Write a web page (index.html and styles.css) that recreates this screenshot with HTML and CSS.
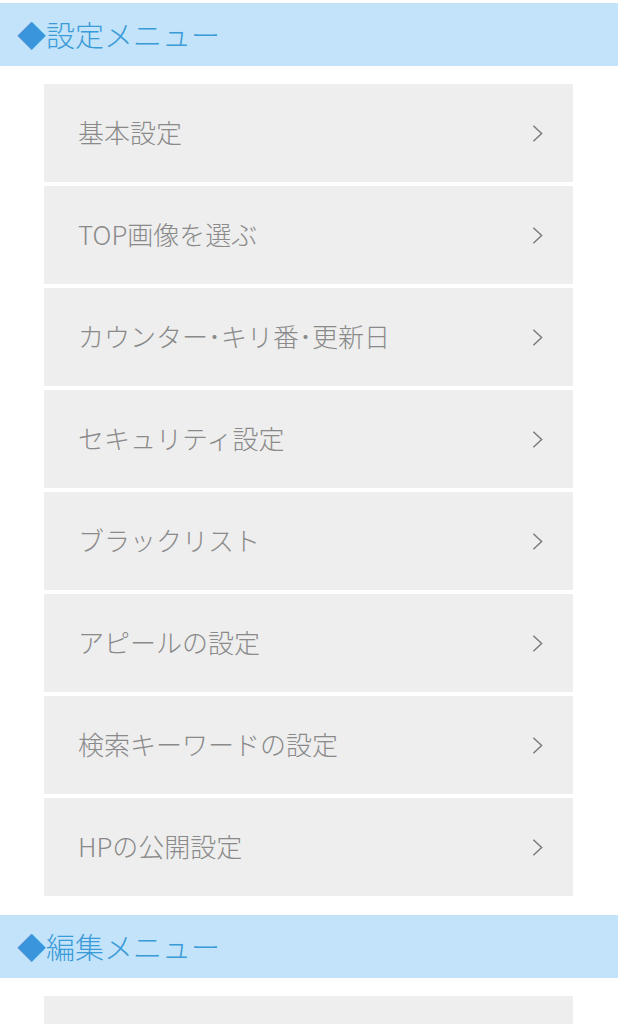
FILE: index.html
```html
<!DOCTYPE html>
<html lang="ja">
<head>
<meta charset="utf-8">
<title>設定メニュー</title>
<link rel="stylesheet" href="styles.css">
</head>
<body>
<section class="section">
  <h2 class="section-title"><span class="diamond">◆</span>設定メニュー</h2>
  <ul class="menu">
    <li class="item"><span class="label">基本設定</span><svg class="chev" viewBox="0 0 12 20"><path d="M1.5 1.5 L10.5 10 L1.5 18.5"/></svg></li>
    <li class="item"><span class="label">TOP画像を選ぶ</span><svg class="chev" viewBox="0 0 12 20"><path d="M1.5 1.5 L10.5 10 L1.5 18.5"/></svg></li>
    <li class="item"><span class="label">カウンター･キリ番･更新日</span><svg class="chev" viewBox="0 0 12 20"><path d="M1.5 1.5 L10.5 10 L1.5 18.5"/></svg></li>
    <li class="item"><span class="label">セキュリティ設定</span><svg class="chev" viewBox="0 0 12 20"><path d="M1.5 1.5 L10.5 10 L1.5 18.5"/></svg></li>
    <li class="item"><span class="label">ブラックリスト</span><svg class="chev" viewBox="0 0 12 20"><path d="M1.5 1.5 L10.5 10 L1.5 18.5"/></svg></li>
    <li class="item"><span class="label">アピールの設定</span><svg class="chev" viewBox="0 0 12 20"><path d="M1.5 1.5 L10.5 10 L1.5 18.5"/></svg></li>
    <li class="item"><span class="label">検索キーワードの設定</span><svg class="chev" viewBox="0 0 12 20"><path d="M1.5 1.5 L10.5 10 L1.5 18.5"/></svg></li>
    <li class="item"><span class="label">HPの公開設定</span><svg class="chev" viewBox="0 0 12 20"><path d="M1.5 1.5 L10.5 10 L1.5 18.5"/></svg></li>
  </ul>
</section>
<section class="section">
  <h2 class="section-title"><span class="diamond">◆</span>編集メニュー</h2>
  <ul class="menu">
    <li class="item"></li>
  </ul>
</section>
</body>
</html>
```

FILE: styles.css
```css
html, body {
  margin: 0;
  padding: 0;
  background: #ffffff;
}
body {
  padding-top: 3px;
  font-family: "Noto Sans CJK JP", "Noto Sans", sans-serif;
  font-weight: 300;
}
.section-title {
  margin: 0 0 18px 0;
  height: 63px;
  display: flex;
  align-items: center;
  padding-left: 17px;
  background: #c2e3f9;
  color: #3b9ad8;
  font-size: 29px;
  font-weight: 300;
  line-height: 1;
}
.diamond {
  color: #3a95dc;
}
.menu {
  list-style: none;
  margin: 0 45px 19px 44px;
  padding: 0;
  display: flex;
  flex-direction: column;
  gap: 4px;
}
.item {
  height: 98px;
  display: flex;
  align-items: center;
  justify-content: space-between;
  padding: 0 30px 0 34px;
  background: #eeeeee;
  color: #8a8a8a;
  font-size: 26px;
  line-height: 1;
}
.label {
  padding-bottom: 3px;
}
.chev {
  width: 11px;
  height: 19px;
  fill: none;
  stroke: #7a7a7a;
  stroke-width: 1.6;
}
```
